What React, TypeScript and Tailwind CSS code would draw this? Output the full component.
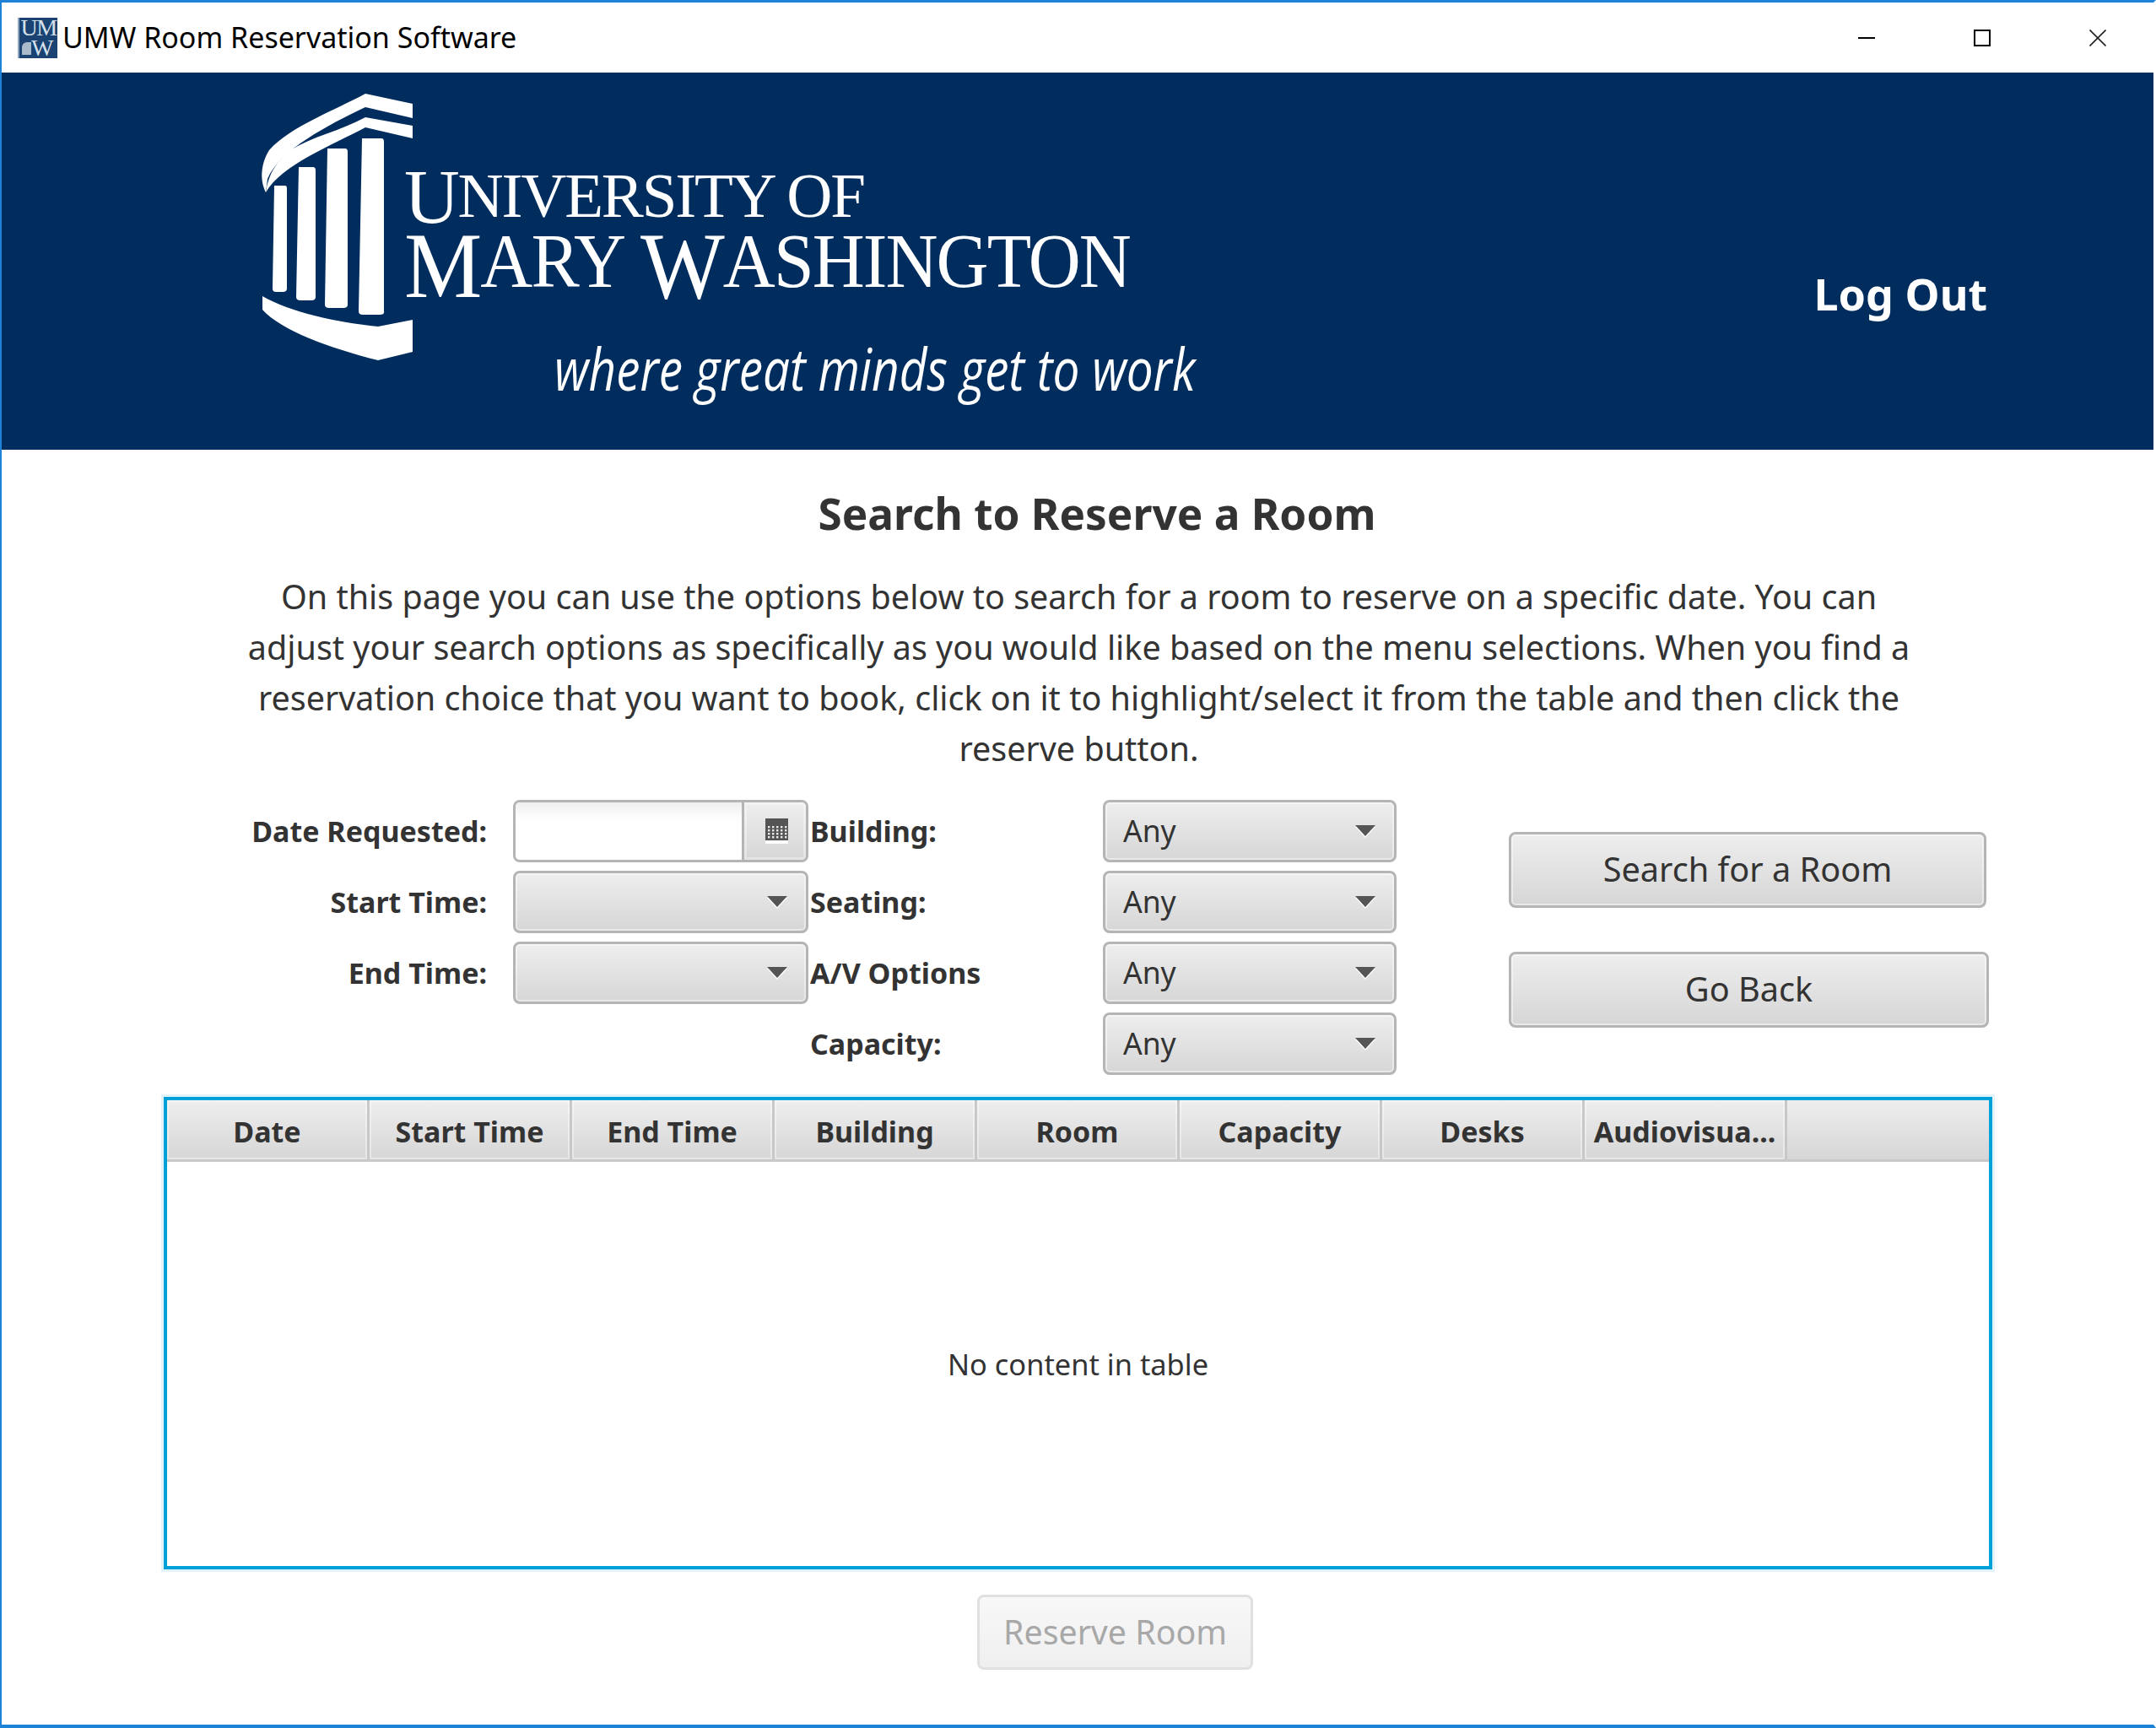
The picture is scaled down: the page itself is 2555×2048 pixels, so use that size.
import React from "react";

const ui = "font-['Noto_Sans','Open_Sans',sans-serif]";
const control =
  "rounded-[8px] border-[3px] border-[#b5b5b5] bg-gradient-to-b from-[#eeeeee] to-[#d6d6d6] shadow-[inset_0_0_0_2px_rgba(255,255,255,0.45)]";

const Arrow = () => (
  <svg width="26" height="16" viewBox="0 0 26 16" className="shrink-0">
    <path d="M1 3 H25 L13 16 Z" fill="#ffffff" />
    <path d="M1 1 H25 L13 14 Z" fill="#555555" />
  </svg>
);

const CalendarIcon = () => (
  <svg width="27" height="30" viewBox="0 0 27 30">
    <rect x="0" y="26" width="27" height="4" fill="#ffffff" />
    <rect x="0" y="0" width="27" height="26" fill="#555555" />
    {[9, 13, 17, 21].map((y) =>
      [3, 8, 13, 18, 23].map((x) => (
        <rect key={`${x}-${y}`} x={x} y={y} width="2.4" height="2.4" fill="#e8e8e8" />
      )),
    )}
  </svg>
);

const Combo = ({ value, width }: { value?: string; width: string }) => (
  <div className={`${control} ${width} h-[74px] flex items-center justify-between pl-[21px] pr-[21px]`}>
    <span className={`${ui} text-[35.5px] text-[#333333]`}>{value}</span>
    <Arrow />
  </div>
);

const DateField = () => (
  <div className="h-[74px] w-[350px] rounded-[8px] border-[3px] border-[#b5b5b5] flex overflow-hidden">
    <div className="flex-1 bg-gradient-to-b from-[#efefef] via-white via-[30%] to-white" />
    <div className="w-[76px] border-l-[3px] border-[#b5b5b5] bg-gradient-to-b from-[#eeeeee] to-[#d6d6d6] flex items-center justify-center pl-[3px] shadow-[inset_0_0_0_3px_rgba(255,255,255,0.35)]">
      <CalendarIcon />
    </div>
  </div>
);

const Label = ({ children }: { children: React.ReactNode }) => (
  <div className={`${ui} h-[74px] flex items-center text-[34px] font-bold text-[#333333]`}>{children}</div>
);

const columns = ["Date", "Start Time", "End Time", "Building", "Room", "Capacity", "Desks", "Audiovisua..."];

const ColumnLogo = () => (
  <svg width="190" height="325" viewBox="305 107 190 325" className="shrink-0">
    <g fill="#ffffff">
      <path d="M434 111 L490 123 V140 L434 127 C390 148 332 178 318 212 L316 228 C308 212 311 192 320 178 C345 150 395 132 434 111 Z" />
      <path d="M434 139 L490 149 V164 L434 151 C395 172 335 195 316 228 C319 205 330 190 345 178 C370 162 405 155 434 139 Z" />
      <path d="M326 220 H339 Q341 220 341 224 V342 Q341 346 336 346 H328 Q324 346 324 342 Z" />
      <path d="M355 198 H372 Q375 198 375 202 V352 Q375 356 370 356 H357 Q352 356 352 352 Z" />
      <path d="M389 176 H410 Q413 176 413 180 V361 Q413 365 408 365 H391 Q386 365 386 361 Z" />
      <path d="M430 164 H453 Q456 164 456 168 V369 Q457 373 451 373 H431 Q426 373 426 369 Z" />
      <path d="M312 351 C345 370 400 382 449 387 L490 379 V417 L449 427 C390 412 335 392 312 367 Z" />
    </g>
  </svg>
);

const Wordmark = () => (
  <div className="font-['Liberation_Serif',serif] text-white leading-none whitespace-nowrap">
    <div className="h-[70px] flex items-end text-[75px] tracking-[-2.2px]">
      <span className="text-[91px] leading-[70px]">U</span>NIVERSITY OF
    </div>
    <div className="h-[86px] flex items-end text-[91px] tracking-[-2px] scale-x-[0.943] origin-left">
      <span className="text-[110px] leading-[80px]">M</span>ARY <span className="text-[112px] leading-[80px] ml-[20px]">W</span>ASHINGTON
    </div>
  </div>
);

const AppIcon = () => (
  <div className="relative w-[47px] h-[48px] bg-[#1a4272] border-l-2 border-[#8fa6bf] font-['Liberation_Serif',serif] text-[#d6e0ea] whitespace-nowrap">
    <div className="text-[28px] leading-[24px] tracking-[-1.5px] text-center">UM</div>
    <div className="text-[28px] leading-[24px] tracking-[-1.5px] pl-[14px]">W</div>
    <div className="absolute left-[3px] bottom-[4px] w-[11px] h-[15px] bg-[#a9bacb] rounded-tl-[6px]" />
  </div>
);

export default function App() {
  return (
    <div className="w-[2555px] h-[2048px] bg-white flex flex-col border-l-2 border-r-[3px] border-r-white border-l-[#1e83d6] border-t-[3px] border-t-[#1e83d6] border-b-[4px] border-b-[#1e83d6] overflow-hidden">
      {/* title bar */}
      <div className="h-[83px] shrink-0 flex items-center pl-[19px] pr-[56px]">
        <AppIcon />
        <span className={`${ui} ml-[6px] text-[34px] text-black`}>UMW Room Reservation Software</span>
        <div className="ml-auto flex items-center gap-[117px]">
          <div className="w-[20px] h-[2px] bg-black" />
          <div className="w-[20px] h-[20px] border-2 border-black" />
          <svg width="20" height="20" viewBox="0 0 20 20">
            <path d="M0.5 0.5 L19.5 19.5 M19.5 0.5 L0.5 19.5" stroke="#222222" strokeWidth="1.6" />
          </svg>
        </div>
      </div>

      {/* banner */}
      <div className="h-[447px] shrink-0 bg-[#002d5d] flex items-start pt-[21px] pl-[302px] pr-[197px]">
        <ColumnLogo />
        <div className="flex flex-col mt-[92px] -ml-[15px]">
          <Wordmark />
          <div className="mt-[41px] ml-[178px] font-['Open_Sans',sans-serif] italic text-[70px] leading-[80px] text-white whitespace-nowrap scale-x-[0.81] origin-left">
            where great minds get to work
          </div>
        </div>
        <span className={`${ui} ml-auto mt-[206px] text-[52px] leading-[70px] font-bold text-white`}>Log Out</span>
      </div>

      {/* content */}
      <div className={`${ui} flex flex-col items-start text-[#333333]`}>
        <h1 className="w-full pl-[46px] mt-[40px] h-[70px] text-center text-[51.3px] leading-[70px] font-bold">
          Search to Reserve a Room
        </h1>
        <p className="w-full mt-[34px] pl-[3px] text-center text-[39.5px] leading-[60px] whitespace-nowrap">
          On this page you can use the options below to search for a room to reserve on a specific date. You can
          <br />
          adjust your search options as specifically as you would like based on the menu selections. When you find a
          <br />
          reservation choice that you want to book, click on it to highlight/select it from the table and then click the
          <br />
          reserve button.
        </p>

        {/* search form */}
        <div className="mt-[31px] flex h-[326px] w-full">
          <div className="w-[575px] flex flex-col gap-[10px] items-end">
            <Label>Date Requested:</Label>
            <Label>Start Time:</Label>
            <Label>End Time:</Label>
          </div>
          <div className="ml-[31px] w-[350px] flex flex-col gap-[10px]">
            <DateField />
            <Combo width="w-[350px]" />
            <Combo width="w-[350px]" />
          </div>
          <div className="ml-[2px] w-[347px] flex flex-col gap-[10px]">
            <Label>Building:</Label>
            <Label>Seating:</Label>
            <Label>A/V Options</Label>
            <Label>Capacity:</Label>
          </div>
          <div className="flex flex-col gap-[10px]">
            <Combo value="Any" width="w-[348px]" />
            <Combo value="Any" width="w-[348px]" />
            <Combo value="Any" width="w-[348px]" />
            <Combo value="Any" width="w-[348px]" />
          </div>
          <div className="ml-[133px] pt-[38px] flex flex-col gap-[52px]">
            <button className={`${control} w-[566px] h-[90px] text-[39.7px] text-[#333333]`}>Search for a Room</button>
            <button className={`${control} w-[569px] h-[90px] text-[39.7px] text-[#333333]`}>Go Back</button>
          </div>
        </div>

        {/* results table */}
        <div className="mt-[26px] ml-[192px] w-[2167px] h-[560px] flex flex-col border-[4px] border-[#00a0d8] shadow-[0_0_0_3px_#e2f3fa]">
          <div className="h-[73px] shrink-0 flex border-b-[3px] border-[#c8c8c8] bg-gradient-to-b from-[#eeeeee] to-[#d6d6d6]">
            {columns.map((c) => (
              <div
                key={c}
                className="w-[240px] shrink-0 border-r-[3px] border-[#c8c8c8] flex items-center justify-center pt-[5px] text-[34px] font-bold whitespace-nowrap shadow-[inset_0_0_0_2px_rgba(255,255,255,0.4)]"
              >
                {c}
              </div>
            ))}
            <div className="flex-1" />
          </div>
          <div className="flex-1 flex items-center justify-center text-[34.4px]">No content in table</div>
        </div>

        <button className="mt-[30px] ml-[1156px] w-[327px] h-[89px] rounded-[8px] border-[3px] border-[#e0e0e0] bg-gradient-to-b from-[#f8f8f8] to-[#efefef] text-[39.3px] text-[#a8a8a8]">
          Reserve Room
        </button>
      </div>
    </div>
  );
}
